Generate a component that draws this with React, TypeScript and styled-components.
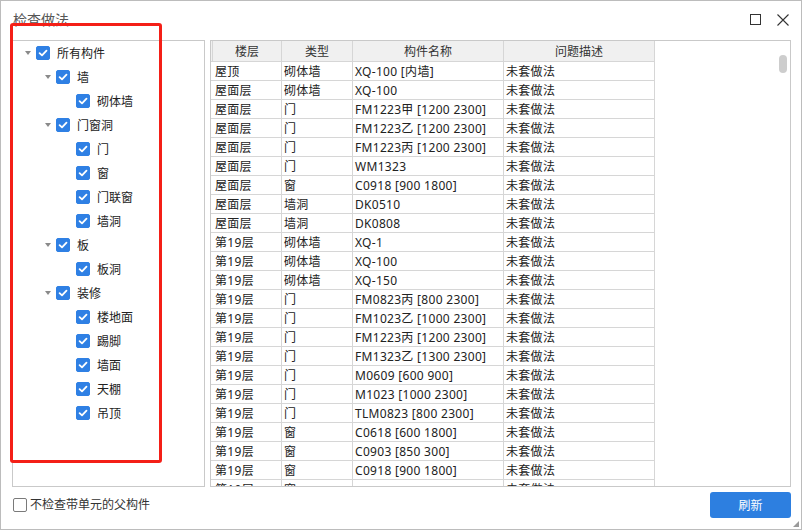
import React, { FC } from 'react';
import styled, { createGlobalStyle } from 'styled-components';

const GlobalStyle = createGlobalStyle`
  html, body {
    margin: 0;
    padding: 0;
    background: #ffffff;
  }
  body {
    font-family: 'Noto Sans', 'Noto Sans CJK SC', sans-serif;
    font-size: 12px;
    color: #222;
  }
`;

const Window = styled.div`
  position: relative;
  box-sizing: border-box;
  width: 802px;
  height: 530px;
  border: 1px solid #bcbcbc;
  background: #fff;
  display: flex;
  flex-direction: column;
`;

const TitleBar = styled.div`
  height: 39px;
  flex: none;
  display: flex;
  align-items: center;
  padding: 0 4px 2px 12px;
  box-sizing: border-box;
`;

const Title = styled.div`
  flex: 1;
  font-size: 14px;
  color: #555;
  line-height: 20px;
`;

const TitleButton = styled.div`
  width: 28px;
  height: 24px;
  display: flex;
  align-items: center;
  justify-content: center;
`;

const Body = styled.div`
  height: 447px;
  flex: none;
  display: flex;
  gap: 5px;
  padding: 0 10px 0 11px;
`;

const TreePanel = styled.div`
  width: 193px;
  box-sizing: border-box;
  border: 1px solid #c9c9c9;
  display: flex;
  flex-direction: column;
`;

const TreeRow = styled.div<{ $level: number }>`
  height: 24px;
  display: flex;
  align-items: center;
  padding-left: ${(p) => 10 + p.$level * 20}px;
`;

const Arrow = styled.span<{ $hidden?: boolean }>`
  width: 10px;
  height: 10px;
  margin-right: 3px;
  display: flex;
  align-items: center;
  justify-content: center;
  visibility: ${(p) => (p.$hidden ? 'hidden' : 'visible')};
  &::before {
    content: '';
    border-left: 3px solid transparent;
    border-right: 3px solid transparent;
    border-top: 4px solid #8a8a8a;
  }
`;

const CheckBox = styled.span<{ $checked?: boolean }>`
  width: 14px;
  height: 14px;
  box-sizing: border-box;
  border-radius: 2px;
  flex: none;
  display: flex;
  align-items: center;
  justify-content: center;
  background: ${(p) => (p.$checked ? '#2f80e4' : '#fff')};
  border: 1px solid ${(p) => (p.$checked ? '#2f80e4' : '#7a7a7a')};
`;

const Label = styled.span`
  margin-left: 7px;
  margin-top: 2px;
  font-size: 12px;
  line-height: 16px;
  color: #222;
  white-space: nowrap;
`;

const TableFrame = styled.div`
  position: relative;
  width: 581px;
  box-sizing: border-box;
  border: 1px solid #c9c9c9;
  overflow: hidden;
`;

const Row = styled.div<{ $header?: boolean }>`
  display: grid;
  grid-template-columns: 2px 69px 71px 151px 151px;
  height: ${(p) => (p.$header ? 21 : 19)}px;
  width: 444px;
`;

const Cell = styled.div<{ $header?: boolean }>`
  box-sizing: border-box;
  border-right: 1px solid #d6d6d6;
  border-bottom: 1px solid #d6d6d6;
  background: ${(p) => (p.$header ? '#f0f0f0' : '#fff')};
  text-align: ${(p) => (p.$header ? 'center' : 'left')};
  padding: 1px 0 0 ${(p) => (p.$header ? 0 : 2)}px;
  line-height: ${(p) => (p.$header ? 20 : 18)}px;
  letter-spacing: ${(p) => (p.$header ? 0 : 0.3)}px;
  font-size: 12px;
  color: ${(p) => (p.$header ? '#333' : '#222')};
  white-space: nowrap;
  overflow: hidden;
`;

const ScrollThumb = styled.div`
  position: absolute;
  right: 3px;
  top: 14px;
  width: 8px;
  height: 18px;
  border-radius: 4px;
  background: #cdcdcd;
`;

const Footer = styled.div`
  height: 42px;
  flex: none;
  box-sizing: border-box;
  display: flex;
  align-items: center;
  padding: 5px 10px 11px 12px;
`;

const FooterLabel = styled.span`
  margin-left: 3px;
  flex: 1;
  font-size: 12px;
  color: #333;
  line-height: 16px;
`;

const PrimaryButton = styled.button`
  width: 81px;
  height: 26px;
  border: none;
  border-radius: 3px;
  background: #2d7fe0;
  color: #fff;
  font-family: inherit;
  font-size: 12px;
  padding: 0;
`;

const Grip = styled.div`
  position: absolute;
  right: 2px;
  bottom: 2px;
  width: 6px;
  height: 6px;
  background-image: radial-gradient(circle, #9a9a9a 0.9px, transparent 1px);
  background-size: 2px 2px;
  clip-path: polygon(100% 0, 100% 100%, 0 100%);
`;

const Highlight = styled.div`
  position: absolute;
  left: 9px;
  top: 22px;
  width: 152px;
  height: 440px;
  box-sizing: border-box;
  border: 3px solid #f41f17;
  border-radius: 3px;
  pointer-events: none;
`;

const Check: FC = () => (
  <svg width="10" height="10" viewBox="0 0 10 10">
    <polyline points="1.6,5.2 4,7.4 8.5,2.6" fill="none" stroke="#fff" strokeWidth="1.8" strokeLinecap="round" strokeLinejoin="round" />
  </svg>
);

type TreeItem = { label: string; level: number; parent?: boolean };

const treeItems: TreeItem[] = [
  { label: '所有构件', level: 0, parent: true },
  { label: '墙', level: 1, parent: true },
  { label: '砌体墙', level: 2 },
  { label: '门窗洞', level: 1, parent: true },
  { label: '门', level: 2 },
  { label: '窗', level: 2 },
  { label: '门联窗', level: 2 },
  { label: '墙洞', level: 2 },
  { label: '板', level: 1, parent: true },
  { label: '板洞', level: 2 },
  { label: '装修', level: 1, parent: true },
  { label: '楼地面', level: 2 },
  { label: '踢脚', level: 2 },
  { label: '墙面', level: 2 },
  { label: '天棚', level: 2 },
  { label: '吊顶', level: 2 },
];

const rows: [string, string, string][] = [
  ['屋顶', '砌体墙', 'XQ-100 [内墙]'],
  ['屋面层', '砌体墙', 'XQ-100'],
  ['屋面层', '门', 'FM1223甲 [1200 2300]'],
  ['屋面层', '门', 'FM1223乙 [1200 2300]'],
  ['屋面层', '门', 'FM1223丙 [1200 2300]'],
  ['屋面层', '门', 'WM1323'],
  ['屋面层', '窗', 'C0918 [900 1800]'],
  ['屋面层', '墙洞', 'DK0510'],
  ['屋面层', '墙洞', 'DK0808'],
  ['第19层', '砌体墙', 'XQ-1'],
  ['第19层', '砌体墙', 'XQ-100'],
  ['第19层', '砌体墙', 'XQ-150'],
  ['第19层', '门', 'FM0823丙 [800 2300]'],
  ['第19层', '门', 'FM1023乙 [1000 2300]'],
  ['第19层', '门', 'FM1223丙 [1200 2300]'],
  ['第19层', '门', 'FM1323乙 [1300 2300]'],
  ['第19层', '门', 'M0609 [600 900]'],
  ['第19层', '门', 'M1023 [1000 2300]'],
  ['第19层', '门', 'TLM0823 [800 2300]'],
  ['第19层', '窗', 'C0618 [600 1800]'],
  ['第19层', '窗', 'C0903 [850 300]'],
  ['第19层', '窗', 'C0918 [900 1800]'],
  ['第19层', '窗', ''],
];

const App: FC = () => {
  return (
    <>
      <GlobalStyle />
      <Window>
        <TitleBar>
          <Title>检查做法</Title>
          <TitleButton>
            <svg width="11" height="11" viewBox="0 0 11 11">
              <rect x="0.5" y="0.5" width="10" height="10" fill="none" stroke="#333" strokeWidth="1" />
            </svg>
          </TitleButton>
          <TitleButton>
            <svg width="12" height="12" viewBox="0 0 12 12">
              <path d="M0.5 0.5 L11.5 11.5 M11.5 0.5 L0.5 11.5" stroke="#333" strokeWidth="1.1" />
            </svg>
          </TitleButton>
        </TitleBar>
        <Body>
          <TreePanel>
            {treeItems.map((item) => (
              <TreeRow key={item.label + item.level} $level={item.level}>
                <Arrow $hidden={!item.parent} />
                <CheckBox $checked>
                  <Check />
                </CheckBox>
                <Label>{item.label}</Label>
              </TreeRow>
            ))}
          </TreePanel>
          <TableFrame>
            <Row $header>
              <Cell $header />
              <Cell $header>楼层</Cell>
              <Cell $header>类型</Cell>
              <Cell $header>构件名称</Cell>
              <Cell $header>问题描述</Cell>
            </Row>
            {rows.map((r, i) => (
              <Row key={i}>
                <Cell />
                <Cell>{r[0]}</Cell>
                <Cell>{r[1]}</Cell>
                <Cell>{r[2]}</Cell>
                <Cell>未套做法</Cell>
              </Row>
            ))}
            <ScrollThumb />
          </TableFrame>
        </Body>
        <Footer>
          <CheckBox />
          <FooterLabel>不检查带单元的父构件</FooterLabel>
          <PrimaryButton>刷新</PrimaryButton>
        </Footer>
        <Grip />
        <Highlight />
      </Window>
    </>
  );
};

export default App;
